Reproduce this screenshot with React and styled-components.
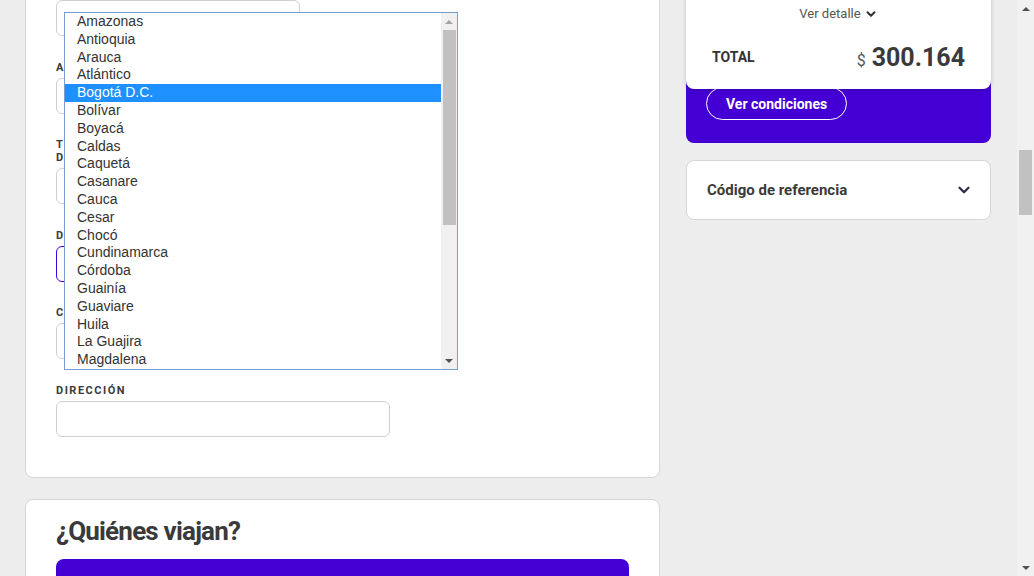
import styled, { createGlobalStyle } from 'styled-components';
import { ChevronDown } from 'lucide-react';

const PURPLE = '#4400d4';

const GlobalStyle = createGlobalStyle`
  html, body {
    margin: 0;
    padding: 0;
    overflow: hidden;
    background: #ededed;
  }
  body {
    font-family: Roboto, "Noto Sans", Arial, sans-serif;
    color: #3a3a3a;
  }
  * {
    box-sizing: border-box;
  }
`;

const Page = styled.div`
  position: relative;
  display: flex;
  width: 1034px;
  height: 576px;
  overflow: hidden;
  background: #ededed;
`;

const Viewport = styled.div`
  flex: 1;
  overflow: hidden;
`;

const Content = styled.div`
  display: grid;
  grid-template-columns: 635px 305px;
  column-gap: 26px;
  align-items: start;
  padding-left: 25px;
  margin-top: -48px;
`;

const LeftColumn = styled.div`
  display: flex;
  flex-direction: column;
  gap: 21px;
`;

const Card = styled.section`
  background: #fff;
  border: 1px solid #d6d6d6;
  border-radius: 8px;
  padding: ${(p) => p.$padding || '30px 30px 40px'};
`;

const Fields = styled.div`
  display: flex;
  flex-direction: column;
  gap: 24.6px;
`;

const Field = styled.div`
  display: flex;
  flex-direction: column;
`;

const Label = styled.label`
  font-size: 11px;
  font-weight: 700;
  line-height: 13px;
  letter-spacing: 1.5px;
  text-transform: uppercase;
  color: #3a3a3a;
  margin-bottom: 4px;
`;

const Input = styled.div`
  width: ${(p) => p.$width}px;
  height: 36px;
  border: 1px solid ${(p) => (p.$focused ? PURPLE : '#cfcfcf')};
  border-radius: 6px;
  background: #fff;
`;

const Title = styled.h2`
  margin: 0 0 12px;
  font-size: 26px;
  line-height: 32px;
  font-weight: 700;
  letter-spacing: -0.8px;
  color: #3a3a3a;
`;

const TravelerBar = styled.div`
  height: 60px;
  background: ${PURPLE};
  border-radius: 8px 8px 0 0;
`;

const RightColumn = styled.aside`
  display: flex;
  flex-direction: column;
  gap: 17px;
`;

const Summary = styled.div`
  background: ${PURPLE};
  border-radius: 0 0 8px 8px;
`;

const SummaryCard = styled.div`
  position: relative;
  z-index: 1;
  background: #fff;
  border-radius: 0 0 8px 8px;
  box-shadow: 0 1px 4px rgba(0, 0, 0, 0.18);
  padding: 54px 26px 17px;
`;

const DetailToggle = styled.div`
  display: flex;
  justify-content: center;
  align-items: center;
  gap: 3px;
  font-size: 13px;
  line-height: 16px;
  color: #555;
`;

const TotalRow = styled.div`
  display: flex;
  justify-content: space-between;
  align-items: center;
  height: 30px;
  margin-top: 20px;
`;

const TotalLabel = styled.span`
  font-size: 14px;
  font-weight: 700;
  color: #333;
`;

const Amount = styled.span`
  display: flex;
  align-items: baseline;
  gap: 6px;
  font-size: 25px;
  font-weight: 700;
  color: #3a3a3a;
`;

const Currency = styled.span`
  font-size: 16px;
  font-weight: 400;
  color: #555;
`;

const Conditions = styled.div`
  padding: 0 20px 23px;
  margin-top: -2px;
`;

const OutlineButton = styled.button`
  height: 33px;
  padding: 0 19px;
  border: 1px solid #fff;
  border-radius: 17px;
  background: transparent;
  color: #fff;
  font-family: inherit;
  font-size: 14px;
  font-weight: 700;
`;

const Collapsible = styled.div`
  display: flex;
  justify-content: space-between;
  align-items: center;
  height: 60px;
  padding: 0 17px 0 20px;
  background: #fff;
  border: 1px solid #d6d6d6;
  border-radius: 8px;
  font-size: 15px;
  font-weight: 700;
  color: #3a3a3a;
`;

/* native select popup, drawn over the form */
const Listbox = styled.div`
  position: absolute;
  top: 12px;
  left: 64px;
  width: 394px;
  height: 358px;
  display: flex;
  background: #fff;
  border: 1px solid #7a9cd3;
  font-family: "Liberation Sans", Arial, sans-serif;
  font-size: 14px;
  color: #333;
`;

const Options = styled.ul`
  flex: 1;
  margin: 0;
  padding: 0;
  list-style: none;
  overflow: hidden;
`;

const Option = styled.li`
  height: 17.8px;
  line-height: 17.8px;
  padding-left: 12px;
  white-space: nowrap;
  background: ${(p) => (p.$selected ? '#1e90ff' : 'transparent')};
  color: ${(p) => (p.$selected ? '#fff' : '#333')};
`;

const Scrollbar = styled.div`
  width: ${(p) => p.$width}px;
  display: flex;
  flex-direction: column;
  align-items: center;
  background: ${(p) => p.$track};
`;

const ArrowBox = styled.div`
  height: 17px;
  width: 100%;
  display: flex;
  align-items: center;
  justify-content: center;
  margin-top: ${(p) => (p.$bottom ? 'auto' : '0')};
`;

const Arrow = styled.span`
  width: 0;
  height: 0;
  border-left: 4px solid transparent;
  border-right: 4px solid transparent;
  ${(p) =>
    p.$down
      ? `border-top: 4px solid ${p.$color};`
      : `border-bottom: 4px solid ${p.$color};`}
`;

const Thumb = styled.div`
  width: ${(p) => p.$width}px;
  height: ${(p) => p.$height}px;
  margin-top: ${(p) => p.$offset}px;
  background: #c1c1c1;
`;

const departments = [
  'Amazonas', 'Antioquia', 'Arauca', 'Atlántico', 'Bogotá D.C.', 'Bolívar',
  'Boyacá', 'Caldas', 'Caquetá', 'Casanare', 'Cauca', 'Cesar', 'Chocó',
  'Cundinamarca', 'Córdoba', 'Guainía', 'Guaviare', 'Huila', 'La Guajira',
  'Magdalena', 'Meta', 'Nariño',
];

const fields = [
  { label: 'Nombres', width: 244 },
  { label: 'Apellidos', width: 334 },
  { label: <>Tipo de<br />documento</>, width: 334 },
  { label: 'Departamento', width: 334, focused: true },
  { label: 'Ciudad', width: 334 },
  { label: 'Dirección', width: 334 },
];

const App = () => (
  <Page>
    <GlobalStyle />
    <Viewport>
      <Content>
        <LeftColumn>
          <Card>
            <Fields>
              {fields.map((f, i) => (
                <Field key={i}>
                  <Label>{f.label}</Label>
                  <Input $width={f.width} $focused={f.focused} />
                </Field>
              ))}
            </Fields>
          </Card>
          <Card $padding="15px 30px 0">
            <Title>¿Quiénes viajan?</Title>
            <TravelerBar />
          </Card>
        </LeftColumn>

        <RightColumn>
          <Summary>
            <SummaryCard>
              <DetailToggle>
                Ver detalle
                <ChevronDown size={14} strokeWidth={3.5} color="#333" />
              </DetailToggle>
              <TotalRow>
                <TotalLabel>TOTAL</TotalLabel>
                <Amount>
                  <Currency>$</Currency>300.164
                </Amount>
              </TotalRow>
            </SummaryCard>
            <Conditions>
              <OutlineButton>Ver condiciones</OutlineButton>
            </Conditions>
          </Summary>
          <Collapsible>
            Código de referencia
            <ChevronDown size={18} strokeWidth={3} color="#2c2c48" />
          </Collapsible>
        </RightColumn>
      </Content>
    </Viewport>

    <Scrollbar $width={17} $track="#f1f1f1">
      <ArrowBox>
        <Arrow $color="#505050" />
      </ArrowBox>
      <Thumb $width={13} $height={65} $offset={133} />
      <ArrowBox $bottom>
        <Arrow $down $color="#505050" />
      </ArrowBox>
    </Scrollbar>

    <Listbox>
      <Options>
        {departments.map((d, i) => (
          <Option key={d} $selected={i === 4}>{d}</Option>
        ))}
      </Options>
      <Scrollbar $width={16} $track="#f0f0f0">
        <ArrowBox>
          <Arrow $color="#a3a3a3" />
        </ArrowBox>
        <Thumb $width={13} $height={195} $offset={0} />
        <ArrowBox $bottom>
          <Arrow $down $color="#505050" />
        </ArrowBox>
      </Scrollbar>
    </Listbox>
  </Page>
);

export default App;
